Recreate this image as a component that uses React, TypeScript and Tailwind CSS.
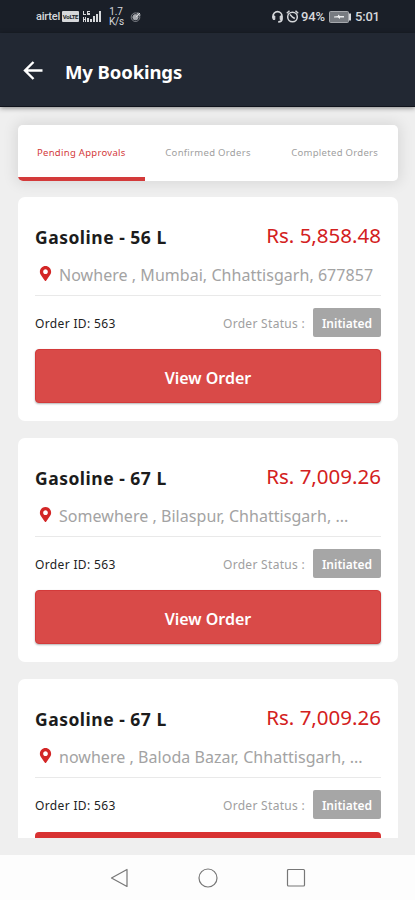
import { FaMapMarkerAlt } from "react-icons/fa";

const tabs = [
  { label: "Pending Approvals", active: true },
  { label: "Confirmed Orders", active: false },
  { label: "Completed Orders", active: false },
];

const orders = [
  {
    title: "Gasoline - 56 L",
    price: "Rs. 5,858.48",
    address: "Nowhere , Mumbai, Chhattisgarh, 677857",
    id: "563",
    status: "Initiated",
    action: "View Order",
  },
  {
    title: "Gasoline - 67 L",
    price: "Rs. 7,009.26",
    address: "Somewhere , Bilaspur, Chhattisgarh, ...",
    id: "563",
    status: "Initiated",
    action: "View Order",
  },
  {
    title: "Gasoline - 67 L",
    price: "Rs. 7,009.26",
    address: "nowhere , Baloda Bazar, Chhattisgarh, ...",
    id: "563",
    status: "Initiated",
    action: "",
  },
];

function StatusBar() {
  return (
    <div className="flex h-[33px] shrink-0 items-center justify-between bg-[#1a1f28] pl-9 pr-[35px] font-['Roboto',sans-serif] text-[#d6d8db]">
      <div className="flex items-center">
        <span className="w-[24px] text-[11px] font-medium leading-none tracking-[-0.2px]">airtel</span>
        <span className="ml-0.5 flex h-[11px] w-[17px] items-center justify-center rounded-[1px] bg-[#d6d8db] text-[6px] font-bold leading-none tracking-[-0.3px] text-[#1a1f28]">
          VoLTE
        </span>
        <svg className="ml-1 h-[13px] w-[19px]" viewBox="0 0 19 13" fill="currentColor">
          <path d="M0 1h1v3h2v1H0zM4 1h3v1H5v1h2v2H4zM0 7h1v2h1V7h1v5H2v-2H1v2H0zM4 8h2v4H4zM7 9h2v3H7zM10 6h2v6h-2zM13 4h2v8h-2zM16 1h2v11h-2z" />
        </svg>
        <div className="ml-[7px] w-[14px] text-center text-[10px] leading-[10px] tracking-[-0.2px]">
          <div>1.7</div>
          <div>K/s</div>
        </div>
        <svg className="ml-[7px] h-[12px] w-[12px]" viewBox="0 0 12 12" fill="none" stroke="currentColor">
          <circle cx="5.5" cy="6.2" r="4.3" strokeWidth="1" opacity="0.5" />
          <circle cx="5.5" cy="6.2" r="2.6" fill="currentColor" opacity="0.75" />
          <path d="M6 6l4-4M8 1.5v2.5h2.5" strokeWidth="1" />
        </svg>
      </div>
      <div className="flex items-center">
        <svg className="h-[13px] w-[13px]" viewBox="0 0 13 13" fill="none" stroke="currentColor" strokeWidth="1.7">
          <path d="M2 8.5V6.2a4.5 4.5 0 0 1 9 0V9c0 2-1.2 2.8-3.8 2.8" />
          <path d="M2.2 6v3.5h1.6V6zM9.2 6v3.5h1.5V6z" fill="currentColor" strokeWidth="1" />
        </svg>
        <svg className="ml-[2px] h-[13px] w-[13px]" viewBox="0 0 13 13" fill="none" stroke="currentColor" strokeWidth="1.5">
          <circle cx="6.5" cy="7" r="4.8" />
          <path d="M4 4.5l2.5 2.7 2.3 1.3M.8 3.2l2.7-2.4M12.2 3.2L9.5.8" />
        </svg>
        <span className="ml-[2px] w-[25px] whitespace-nowrap text-[13px] font-medium leading-none tracking-[-0.2px]">94%</span>
        <svg className="ml-[3px] h-[12px] w-[23px]" viewBox="0 0 23 12">
          <rect x=".5" y=".5" width="19" height="11" rx="1" fill="#777b81" stroke="#a5a8ad" />
          <path d="M5 5.5l4-.5V3.5l2 1.5h4v1.500h-4V8L9 6.500H5z" fill="#eceef0" />
          <path d="M21 2.5v7" stroke="#d6d8db" strokeWidth="2" />
        </svg>
        <span className="ml-[3px] w-[25px] whitespace-nowrap text-[13px] font-medium leading-none tracking-[-0.2px]">5:01</span>
      </div>
    </div>
  );
}

function Header() {
  return (
    <header className="relative z-10 flex h-[74px] shrink-0 items-center border-b border-[#10131c] bg-[#222833] pl-[23px] pt-0.5 text-white shadow-[0_1px_5px_rgba(0,0,0,0.45)]">
      <svg className="h-5 w-5" viewBox="0 0 20 20" fill="none" stroke="currentColor" strokeWidth="2.4">
        <path d="M19.5 9.5H2M10.5 1L2 9.5l8.5 8.5" />
      </svg>
      <h1 className="ml-[22px] pt-0.5 text-[18.5px] font-bold leading-6 tracking-[-0.1px]">My Bookings</h1>
    </header>
  );
}

function Tabs() {
  return (
    <div className="flex h-14 shrink-0 overflow-hidden rounded-[5px] bg-white">
      {tabs.map((tab) => (
        <button
          key={tab.label}
          className={
            tab.active
              ? "flex-1 whitespace-nowrap border-b-4 border-[#d33a3a] pt-[5px] text-[9.5px] tracking-[0.3px] text-[#d33a3a]"
              : "flex-1 whitespace-nowrap border-b-4 border-transparent pt-[5px] text-[9.5px] tracking-[0.3px] text-[#a0a0a0]"
          }
        >
          {tab.label}
        </button>
      ))}
    </div>
  );
}

function OrderCard({ order }: { order: (typeof orders)[number] }) {
  return (
    <div className="h-[224px] shrink-0 rounded-[7px] bg-white px-[17px] pt-[25px]">
      <div className="flex h-[30px] items-center justify-between whitespace-nowrap">
        <h2 className="text-[17.5px] font-bold tracking-[0.5px] text-[#1c1c1c]">{order.title}</h2>
        <p className="pb-[3px] text-[20.5px] text-[#d32020]">{order.price}</p>
      </div>
      <div className="mt-2 flex h-[30px] items-center whitespace-nowrap pl-1">
        <FaMapMarkerAlt className="-mt-1 h-[15px] w-[13px] text-[#d32626]" />
        <p className="ml-[7px] text-[16px] tracking-[0.04px] text-[#a3a3a3]">{order.address}</p>
      </div>
      <div className="mt-[5px] h-px bg-[#e9e9e9]" />
      <div className="mt-3 flex h-[29px] items-center whitespace-nowrap">
        <p className="pt-0.5 text-[12px] tracking-[0.35px] text-[#222]">Order ID: {order.id}</p>
        <p className="ml-auto pt-0.5 text-[12px] tracking-[0.3px] text-[#a0a0a0]">Order Status :</p>
        <span className="ml-2 flex h-[29px] w-[68px] items-center justify-center rounded-[2px] bg-[#a6a6a6] pt-0.5 text-[12px] font-semibold text-white">
          {order.status}
        </span>
      </div>
      <button
        className={
          order.action
            ? "mt-3 block h-[54px] w-full rounded-[4px] border border-[#d33a3a] bg-[#d94a48] pt-[3px] text-[16px] font-semibold text-white shadow-[0_1px_2px_rgba(0,0,0,0.3)]"
            : "mt-[13px] block h-[53px] w-full rounded-[4px] bg-[#d83232]"
        }
      >
        {order.action}
      </button>
    </div>
  );
}

function NavBar() {
  return (
    <div className="flex h-[45px] shrink-0 items-center justify-center bg-[#fdfdfd]">
      <svg className="h-[22px] w-[200px]" viewBox="0 0 200 22" fill="none" stroke="#777" strokeWidth="1.2">
        <path d="M19 2.5v17L3.500 11z" strokeLinejoin="round" />
        <circle cx="100" cy="11" r="9" />
        <rect x="179.5" y="2.5" width="17" height="16.5" rx="1" />
      </svg>
    </div>
  );
}

export default function App() {
  return (
    <div className="flex h-[900px] w-[415px] flex-col overflow-hidden bg-[#efefef] font-['Noto_Sans',sans-serif]">
      <StatusBar />
      <Header />
      <main className="flex h-[731px] shrink-0 flex-col overflow-hidden pl-[18px] pr-[17px] pt-[18px]">
        <div className="rounded-[5px] shadow-[0_0_14px_3px_rgba(0,0,0,0.09)]">
          <Tabs />
        </div>
        <div className="relative mt-4 flex flex-col gap-[17px]">
          {orders.map((order, i) => (
            <OrderCard key={i} order={order} />
          ))}
        </div>
      </main>
      <div className="h-[17px] shrink-0" />
      <NavBar />
    </div>
  );
}
